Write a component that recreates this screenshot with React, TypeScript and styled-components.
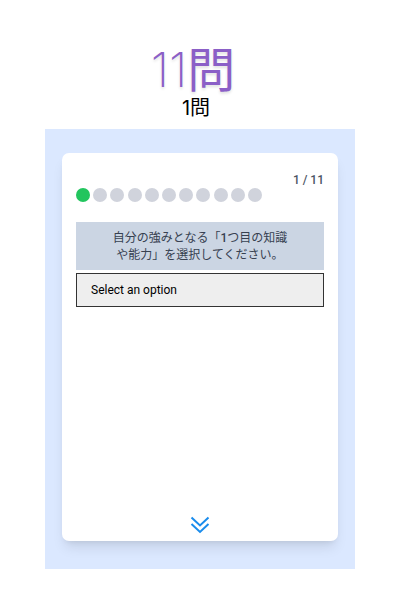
import React from "react";
import styled, { createGlobalStyle } from "styled-components";

const GlobalStyle = createGlobalStyle`
  *, *::before, *::after { box-sizing: border-box; }
  body {
    margin: 0;
    background: #ffffff;
    font-family: Roboto, "Noto Sans CJK JP", sans-serif;
  }
`;

const Page = styled.main`
  min-height: 100vh;
  padding: 42px 45px 31px;
  display: flex;
  flex-direction: column;
`;

const Header = styled.header`
  display: flex;
  flex-direction: column;
  align-items: center;
  padding-right: 8px;
`;

const Title = styled.h1`
  margin: 0;
  padding-right: 6px;
  font-family: Inter, "Noto Sans CJK JP", sans-serif;
  font-size: 48px;
  line-height: 56px;
  font-weight: 400;
  color: #8b5fc7;
  text-shadow: 0 2px 3px rgba(0, 0, 0, 0.12);
`;

const TitleNumber = styled.span`
  font-weight: 200;
`;

const Subtitle = styled.p`
  margin: 0;
  font-family: Inter, "Noto Sans CJK JP", sans-serif;
  font-size: 20px;
  line-height: 20px;
  color: #000000;
`;

const Stage = styled.section`
  flex: 1;
  display: flex;
  margin-top: 11px;
  padding: 24px 17px 28px;
  background: #dbe8ff;
`;

const Card = styled.form`
  flex: 1;
  display: flex;
  flex-direction: column;
  min-width: 0;
  padding: 19px 14px 4px;
  border-radius: 7px;
  background: #ffffff;
  box-shadow: 0 9px 13px -3px rgba(0, 0, 0, 0.1), 0 4px 6px -4px rgba(0, 0, 0, 0.1);
`;

const Counter = styled.div`
  align-self: flex-end;
  font-size: 12px;
  line-height: 16px;
  font-weight: 500;
  color: #4b5563;
`;

const Steps = styled.div`
  display: flex;
  justify-content: space-between;
  width: 75%;
`;

const Step = styled.span<{ $active: boolean }>`
  width: 14px;
  height: 14px;
  border-radius: 50%;
  background: ${({ $active }) => ($active ? "#22c55e" : "#d0d3dc")};
`;

const Question = styled.label`
  margin-top: 20px;
  padding: 8px 32px 6px;
  background: #cbd5e3;
  color: #374151;
  font-size: 12px;
  line-height: 17px;
  text-align: center;
`;

const Ordinal = styled.span`
  font-weight: 500;
`;

const Answer = styled.select`
  appearance: none;
  width: 100%;
  height: 34px;
  margin: 3px 0 0;
  padding: 0 14px;
  border: 1px solid #333333;
  border-radius: 0;
  background: #eeeeee;
  color: #000000;
  font-family: Roboto, sans-serif;
  font-size: 12px;
`;

const NextButton = styled.button`
  align-self: center;
  display: flex;
  margin-top: auto;
  padding: 0;
  border: 0;
  background: none;
  color: #1a8cec;
  cursor: pointer;
`;

const STEP_COUNT = 11;

export default function App() {
  return (
    <>
      <GlobalStyle />
      <Page>
        <Header>
          <Title>
            <TitleNumber>11</TitleNumber>問
          </Title>
          <Subtitle>1問</Subtitle>
        </Header>
        <Stage>
          <Card>
            <Counter>1 / 11</Counter>
            <Steps>
              {Array.from({ length: STEP_COUNT }, (_, i) => (
                <Step key={i} $active={i === 0} />
              ))}
            </Steps>
            <Question htmlFor="answer">
              自分の強みとなる「<Ordinal>1</Ordinal>つ目の知識や能力」を選択してください。
            </Question>
            <Answer id="answer" defaultValue="">
              <option value="">Select an option</option>
            </Answer>
            <NextButton type="button" aria-label="Next">
              <svg width="24" height="24" viewBox="0 0 24 24" fill="none" stroke="currentColor" strokeWidth="2">
                <path d="M3.5 4.500l8.500 8 8.500-8M3.5 11l8.500 8 8.500-8" />
              </svg>
            </NextButton>
          </Card>
        </Stage>
      </Page>
    </>
  );
}
